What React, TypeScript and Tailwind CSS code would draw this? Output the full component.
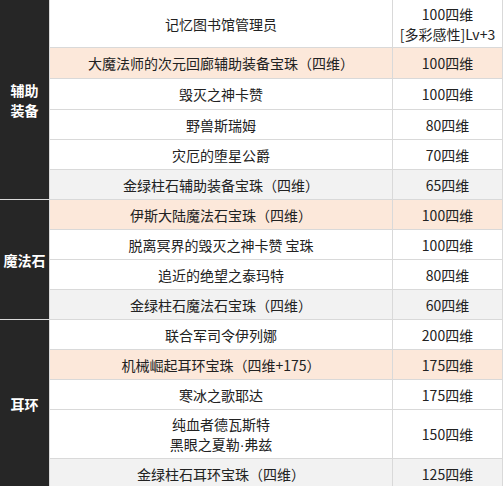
const groups = [
  {
    label: ["辅助", "装备"],
    rows: [
      { name: ["记忆图书馆管理员"], value: ["100四维", "[多彩感性]Lv+3"], bg: "white", h: "h-[47px]" },
      { name: ["大魔法师的次元回廊辅助装备宝珠（四维）"], value: ["100四维"], bg: "peach", h: "h-[30px]" },
      { name: ["毁灭之神卡赞"], value: ["100四维"], bg: "white", h: "h-[30px]" },
      { name: ["野兽斯瑞姆"], value: ["80四维"], bg: "white" },
      { name: ["灾厄的堕星公爵"], value: ["70四维"], bg: "white" },
      { name: ["金绿柱石辅助装备宝珠（四维）"], value: ["65四维"], bg: "grey" },
    ],
  },
  {
    label: ["魔法石"],
    rows: [
      { name: ["伊斯大陆魔法石宝珠（四维）"], value: ["100四维"], bg: "peach" },
      { name: ["脱离冥界的毁灭之神卡赞 宝珠"], value: ["100四维"], bg: "white" },
      { name: ["追近的绝望之泰玛特"], value: ["80四维"], bg: "white" },
      { name: ["金绿柱石魔法石宝珠（四维）"], value: ["60四维"], bg: "grey" },
    ],
  },
  {
    label: ["耳环"],
    rows: [
      { name: ["联合军司令伊列娜"], value: ["200四维"], bg: "white" },
      { name: ["机械崛起耳环宝珠（四维+175）"], value: ["175四维"], bg: "peach" },
      { name: ["寒冰之歌耶达"], value: ["175四维"], bg: "white" },
      { name: ["纯血者德瓦斯特", "黑眼之夏勒·弗兹"], value: ["150四维"], bg: "white", h: "h-[48px]" },
      { name: ["金绿柱石耳环宝珠（四维）"], value: ["125四维"], bg: "grey" },
    ],
  },
];

const bgClass: Record<string, string> = {
  white: "bg-white",
  peach: "bg-[#fce8da]",
  grey: "bg-[#f2f2f2]",
};

// the middle dot is full width in the CJK font, so give it a latin one
const Text = ({ s }: { s: string }) => {
  const parts = s.split("·");
  return (
    <span>
      {parts.map((p, i) => (
        <span key={i}>
          {i > 0 && <span className="font-['Liberation_Sans']">·</span>}
          {p}
        </span>
      ))}
    </span>
  );
};

export default function App() {
  return (
    <div
      className="w-[503px] bg-white text-[14px] leading-[20px] text-[#222]"
      style={{ fontFamily: '"Microsoft YaHei", "Noto Sans CJK SC", "Noto Sans", sans-serif' }}
    >
      {groups.map((g, gi) => (
        <div key={gi} className="flex border-b border-[#d9d9d9]">
          <div className="w-[49px] shrink-0 bg-[#262626] flex flex-col items-center justify-center font-bold text-white">
            {g.label.map((l) => (
              <span key={l}>{l}</span>
            ))}
          </div>
          <div className="flex-1 border-l border-[#d9d9d9]">
            {g.rows.map((r, ri) => (
              <div
                key={ri}
                className={`flex ${r.h ?? "h-[29px]"} ${bgClass[r.bg]} ${
                  ri < g.rows.length - 1 ? "box-content border-b border-[#d9d9d9]" : ""
                }`}
              >
                <div className="w-[342px] shrink-0 flex flex-col items-center justify-center border-r border-[#d9d9d9] box-content">
                  {r.name.map((n) => (
                    <Text key={n} s={n} />
                  ))}
                </div>
                <div className="w-[109px] shrink-0 flex flex-col items-center justify-center border-r border-[#d9d9d9] box-content">
                  {r.value.map((v) => (
                    <span key={v}>{v}</span>
                  ))}
                </div>
              </div>
            ))}
          </div>
        </div>
      ))}
    </div>
  );
}
